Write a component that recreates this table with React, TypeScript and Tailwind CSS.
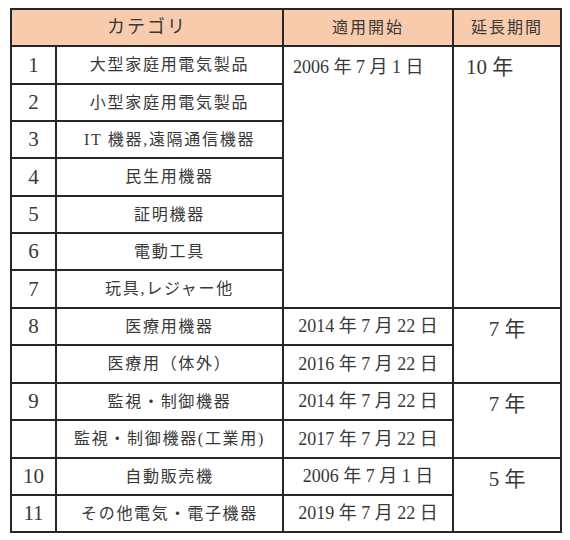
import React from "react";

const font = { fontFamily: '"Liberation Serif", "Noto Sans CJK JP", serif' };

const B = "border-2 border-[#262626]";

export default function App() {
  return (
    <div className="w-[570px] h-[540px] bg-white pt-[8px] pl-[10px]" style={font}>
      <table className="border-collapse table-fixed w-[550px] text-[#383838]">
        <colgroup>
          <col className="w-[45px]" />
          <col className="w-[227px]" />
          <col className="w-[170px]" />
          <col className="w-[108px]" />
        </colgroup>
        <tbody>
          <tr className="h-[37px] bg-[#f8cbad]">
            <td colSpan={2} className={`${B} text-center text-[18px] tracking-[2px]`}>カテゴリ</td>
            <td className={`${B} text-center text-[16px] tracking-[2px]`}>適用開始</td>
            <td className={`${B} text-center text-[16px] tracking-[2px]`}>延長期間</td>
          </tr>
          <Row n="1" label="大型家庭用電気製品" h="h-[38px]">
            <td rowSpan={7} className={`${B} align-top pl-[9px] pt-[7px] text-[18px] whitespace-nowrap`}>2006 年 7 月 1 日</td>
            <td rowSpan={7} className={`${B} align-top pl-[12px] pt-[5px] text-[21px]`}>10 年</td>
          </Row>
          <Row n="2" label="小型家庭用電気製品" h="h-[37px]" />
          <Row n="3" label="IT 機器,遠隔通信機器" h="h-[37px]" />
          <Row n="4" label="民生用機器" h="h-[38px]" />
          <Row n="5" label="証明機器" h="h-[37px]" />
          <Row n="6" label="電動工具" h="h-[37px]" />
          <Row n="7" label="玩具,レジャー他" h="h-[38px]" />
          <Row n="8" label="医療用機器" h="h-[37px]">
            <DateCell>2014 年 7 月 22 日</DateCell>
            <YearCell>7 年</YearCell>
          </Row>
          <Row n="" label="医療用（体外）" h="h-[38px]">
            <DateCell>2016 年 7 月 22 日</DateCell>
          </Row>
          <Row n="9" label="監視・制御機器" h="h-[37px]">
            <DateCell>2014 年 7 月 22 日</DateCell>
            <YearCell>7 年</YearCell>
          </Row>
          <Row n="" label="監視・制御機器(工業用)" h="h-[38px]">
            <DateCell>2017 年 7 月 22 日</DateCell>
          </Row>
          <Row n="10" label="自動販売機" h="h-[37px]">
            <DateCell>2006 年 7 月 1 日</DateCell>
            <YearCell>5 年</YearCell>
          </Row>
          <Row n="11" label="その他電気・電子機器" h="h-[37px]">
            <DateCell>2019 年 7 月 22 日</DateCell>
          </Row>
        </tbody>
      </table>
    </div>
  );
}

function Row({ n, label, h, children }: { n: string; label: string; h: string; children?: React.ReactNode }) {
  return (
    <tr className={h}>
      <td className={`${B} text-center text-[21px] leading-none`}>{n}</td>
      <td className={`${B} text-center text-[16px] tracking-[1.7px] whitespace-nowrap`}>{label}</td>
      {children}
    </tr>
  );
}

function DateCell({ children }: { children: React.ReactNode }) {
  return <td className={`${B} text-center text-[18px] whitespace-nowrap`}>{children}</td>;
}

function YearCell({ children }: { children: React.ReactNode }) {
  return <td rowSpan={2} className={`${B} align-top text-center pt-[5px] text-[21px]`}>{children}</td>;
}
